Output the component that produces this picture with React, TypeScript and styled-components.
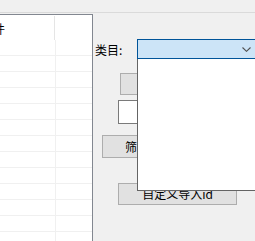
import React from "react";
import styled, { createGlobalStyle } from "styled-components";

const GlobalStyle = createGlobalStyle`
  html, body {
    margin: 0;
    padding: 0;
    background: #f0f0f0;
  }
  body {
    font-family: "Noto Sans CJK SC", "Liberation Sans", sans-serif;
    font-size: 12px;
    color: #000;
  }
`;

const Window = styled("div")`
  width: 255px;
  height: 241px;
  overflow: hidden;
  display: flex;
  flex-direction: column;
  background: #f0f0f0;
`;

const TopStrip = styled("div")`
  height: 12px;
  flex: none;
  border-bottom: 1px solid #dadada;
`;

const Main = styled("div")`
  flex: 1;
  min-height: 0;
  margin-top: 1px;
  display: flex;
`;

const ListPanel = styled("div")`
  width: 92px;
  flex: none;
  background: #fff;
  border-top: 1px solid #828790;
  border-right: 1px solid #828790;
  overflow: hidden;
`;

const HeaderRow = styled("div")`
  height: 25px;
  display: grid;
  grid-template-columns: 55px 1fr;
  padding-top: 1px;
  box-sizing: border-box;
`;

const HeaderCell = styled("div")<{ $divider?: boolean }>`
  display: flex;
  align-items: center;
  white-space: nowrap;
  overflow: hidden;
  line-height: 12px;
  border-right: ${(p) => (p.$divider ? "1px solid #e5e5e5" : "none")};
`;

const HeaderText = styled("span")`
  margin-left: -7px;
  margin-top: 2px;
`;

const GridRow = styled("div")`
  height: 16px;
  box-sizing: border-box;
  display: grid;
  grid-template-columns: 56px 1fr;
  border-bottom: 1px solid #f0f0f0;
`;

const GridCell = styled("div")<{ $divider?: boolean }>`
  border-right: ${(p) => (p.$divider ? "1px solid #f0f0f0" : "none")};
`;

const FormArea = styled("div")`
  flex: 1;
  min-width: 0;
  display: flex;
  flex-direction: column;
  align-items: flex-start;
  position: relative;
`;

const CategoryRow = styled("div")`
  margin-top: 25px;
  margin-left: 2px;
  height: 20px;
  display: flex;
  align-items: center;
  position: relative;
  z-index: 5;
`;

const Label = styled("span")`
  width: 42px;
  line-height: 12px;
  margin-top: 1px;
  white-space: nowrap;
`;

const ComboWrap = styled("div")`
  position: relative;
  width: 130px;
  height: 20px;
`;

const Combo = styled("div")`
  height: 20px;
  box-sizing: border-box;
  border: 1px solid #005499;
  background: #cce4f7;
  display: flex;
  align-items: center;
  justify-content: flex-end;
  padding-right: 15px;
`;

const DropList = styled("div")`
  position: absolute;
  top: 100%;
  left: 0;
  width: 130px;
  height: 132px;
  box-sizing: border-box;
  background: #fff;
  border: 1px solid #646464;
  border-top: none;
`;

const Button = styled("div")<{ $left: number; $top: number; $width: number; $height?: number }>`
  margin-left: ${(p) => p.$left}px;
  margin-top: ${(p) => p.$top}px;
  width: ${(p) => p.$width}px;
  height: ${(p) => p.$height ?? 22}px;
  box-sizing: border-box;
  background: #e1e1e1;
  border: 1px solid #adadad;
  display: flex;
  align-items: center;
  justify-content: center;
  line-height: 12px;
  white-space: nowrap;
  flex: none;
`;

const TextBox = styled("div")<{ $left: number; $top: number }>`
  margin-left: ${(p) => p.$left}px;
  margin-top: ${(p) => p.$top}px;
  width: 60px;
  height: 24px;
  box-sizing: border-box;
  background: #fff;
  border: 1px solid #7a7a7a;
  flex: none;
`;

const Chevron = () => (
  <svg width="9" height="5" viewBox="0 0 9 5">
    <polyline points="0.5,0.5 4.5,4.3 8.5,0.5" fill="none" stroke="#505050" strokeWidth="1.1" />
  </svg>
);

const rows = Array.from({ length: 13 }, (_, i) => i);

const App = () => {
  return (
    <>
      <GlobalStyle />
      <Window>
        <TopStrip />
        <Main>
          <ListPanel>
            <HeaderRow>
              <HeaderCell $divider>
                <HeaderText>件</HeaderText>
              </HeaderCell>
              <HeaderCell />
            </HeaderRow>
            {rows.map((r) => (
              <GridRow key={r}>
                <GridCell $divider />
                <GridCell />
              </GridRow>
            ))}
          </ListPanel>
          <FormArea>
            <CategoryRow>
              <Label>类目:</Label>
              <ComboWrap>
                <Combo>
                  <Chevron />
                </Combo>
                <DropList />
              </ComboWrap>
            </CategoryRow>
            <Button $left={27} $top={14} $width={60} />
            <TextBox $left={25} $top={5} />
            <Button $left={9} $top={11} $width={70} $height={23}>
              筛选
            </Button>
            <Button $left={25} $top={25} $width={119}>
              自定义导入id
            </Button>
          </FormArea>
        </Main>
      </Window>
    </>
  );
};

export default App;
